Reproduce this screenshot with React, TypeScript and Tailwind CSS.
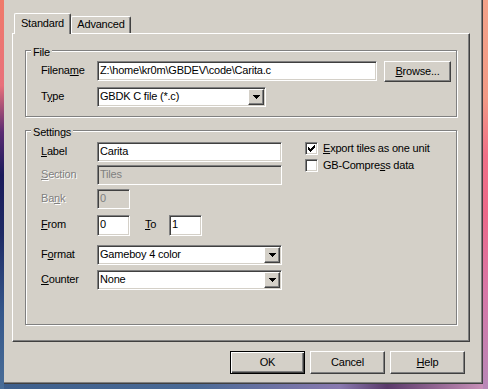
import type { ReactNode } from 'react';

const sunken =
  'border border-t-[#808080] border-l-[#808080] border-b-white border-r-white shadow-[inset_1px_1px_0_#404040,inset_-1px_-1px_0_#d4d0c8] p-[1px]';
const raised =
  'border border-t-white border-l-white border-r-[#404040] border-b-[#404040] shadow-[inset_-1px_-1px_0_#808080]';

const Row = ({ children, className = '' }: { children: ReactNode; className?: string }) => (
  <div className={`flex items-start ${className}`}>{children}</div>
);

const Lbl = ({ children, disabled }: { children: ReactNode; disabled?: boolean }) => (
  <div
    className={`w-[56px] shrink-0 pt-[3px] leading-[13px] ${
      disabled ? 'text-[#808080] [text-shadow:1px_1px_0_#fff]' : ''
    }`}
  >
    {children}
  </div>
);

const Edit = ({ value, w, h = 'h-[20px]', disabled }: { value: string; w: string; h?: string; disabled?: boolean }) => (
  <div className={`${w} ${h} shrink-0 ${sunken} ${disabled ? 'bg-[#d4d0c8] text-[#808080]' : 'bg-white'}`}>
    <div className="pl-[1px] pt-[1px] leading-[13px] whitespace-nowrap overflow-hidden">{value}</div>
  </div>
);

const Arrow = () => (
  <svg width="7" height="4" viewBox="0 0 7 4" shapeRendering="crispEdges">
    <rect x="0" y="0" width="7" height="1" fill="#000" />
    <rect x="1" y="1" width="5" height="1" fill="#000" />
    <rect x="2" y="2" width="3" height="1" fill="#000" />
    <rect x="3" y="3" width="1" height="1" fill="#000" />
  </svg>
);

const Combo = ({ value, w }: { value: string; w: string }) => (
  <div className={`${w} h-[20px] shrink-0 flex bg-white ${sunken}`}>
    <div className="flex-1 pl-[1px] pt-[1px] leading-[13px] whitespace-nowrap overflow-hidden">{value}</div>
    <div className={`w-[16px] h-[16px] bg-[#d4d0c8] flex items-center justify-center ${raised}`}>
      <Arrow />
    </div>
  </div>
);

const Check = ({ checked, children }: { checked?: boolean; children: ReactNode }) => (
  <div className="flex items-center h-[13px]">
    <div className={`w-[13px] h-[13px] bg-white flex items-center justify-center ${sunken}`}>
      {checked && (
        <svg width="7" height="7" viewBox="0 0 7 7" shapeRendering="crispEdges">
          {[2, 3, 4, 3, 2, 1, 0].map((y, x) => (
            <rect key={x} x={x} y={y} width="1" height="3" fill="#000" />
          ))}
        </svg>
      )}
    </div>
    <span className="ml-[5px] leading-[13px] whitespace-nowrap">{children}</span>
  </div>
);

const Group = ({ title, className, children }: { title: string; className: string; children: ReactNode }) => (
  <div className={`relative border border-[#808080] shadow-[inset_1px_1px_0_#fff,1px_1px_0_#fff] ${className}`}>
    <span className="absolute left-[5px] top-[-5px] px-[2px] bg-[#d4d0c8] leading-[13px]">{title}</span>
    {children}
  </div>
);

const Btn = ({ children, def, w = 'w-[75px]', h = 'h-[23px]' }: { children: ReactNode; def?: boolean; w?: string; h?: string }) => (
  <div
    className={`${w} ${h} shrink-0 flex items-center justify-center bg-[#d4d0c8] leading-[13px] ${
      def
        ? 'border border-black shadow-[inset_1px_1px_0_#fff,inset_-1px_-1px_0_#404040,inset_-2px_-2px_0_#808080]'
        : raised
    }`}
  >
    {children}
  </div>
);

export default function App() {
  return (
    <div className="flex w-[488px] h-[389px] overflow-hidden font-['Liberation_Sans',Arial,sans-serif] text-[11px] text-black tracking-[-0.2px]">
      <div className="w-[4px] shrink-0 bg-[linear-gradient(to_bottom,#f07a6a_0%,#e8707a_22%,#5a2a72_34%,#1a1a5a_45%,#1e2a64_60%,#34568a_80%,#4a6e98_100%)]" />
      <div className="w-[479px] shrink-0 flex flex-col">
        <div className="h-[384px] bg-[#d4d0c8] border-r border-b border-r-[#404040] border-b-[#404040] shadow-[inset_-1px_-1px_0_#808080] flex flex-col">
          {/* tabs */}
          <div className="h-[33px] flex items-end pl-[10px]">
            <div className="relative z-10 w-[57px] h-[21px] mb-[-1px] bg-[#d4d0c8] border-t border-l border-r border-t-white border-l-white border-r-[#404040] shadow-[inset_-1px_0_0_#808080] rounded-tl-[2px] rounded-tr-[2px] flex justify-center pt-[3px] leading-[13px]">
              Standard
            </div>
            <div className="w-[60px] h-[17px] bg-[#d4d0c8] border-t border-l border-r border-t-white border-l-white border-r-[#404040] shadow-[inset_-1px_0_0_#808080] rounded-tl-[2px] rounded-tr-[2px] flex justify-center pt-[1px] leading-[13px]">
              Advanced
            </div>
          </div>

          {/* tab page */}
          <div className="ml-[8px] w-[458px] h-[309px] border border-t-white border-l-white border-r-[#404040] border-b-[#404040] shadow-[inset_-1px_-1px_0_#808080] flex flex-col">
            <Group title="File" className="ml-[12px] mt-[16px] w-[432px] h-[67px] pt-[10px] pl-[15px]">
              <Row>
                <Lbl>
                  Filena<u>m</u>e
                </Lbl>
                <Edit value="Z:\home\kr0m\GBDEV\code\Carita.c" w="w-[280px]" />
                <div className="ml-[7px]">
                  <Btn w="w-[67px]" h="h-[21px]">
                    <span>
                      <u>B</u>rowse...
                    </span>
                  </Btn>
                </div>
              </Row>
              <Row className="mt-[5px]">
                <Lbl>
                  T<u>y</u>pe
                </Lbl>
                <Combo value="GBDK C file (*.c)" w="w-[169px]" />
              </Row>
            </Group>

            <Group title="Settings" className="ml-[12px] mt-[13px] w-[432px] h-[195px] pt-[11px] pl-[15px] flex">
              <div className="flex flex-col">
                <Row>
                  <Lbl>
                    <u>L</u>abel
                  </Lbl>
                  <Edit value="Carita" w="w-[185px]" />
                </Row>
                <Row className="mt-[3px]">
                  <Lbl disabled>
                    <u>S</u>ection
                  </Lbl>
                  <Edit value="Tiles" w="w-[185px]" disabled />
                </Row>
                <Row className="mt-[4px]">
                  <Lbl disabled>
                    Ba<u>n</u>k
                  </Lbl>
                  <Edit value="0" w="w-[33px]" disabled />
                </Row>
                <Row className="mt-[6px]">
                  <Lbl>
                    <u>F</u>rom
                  </Lbl>
                  <Edit value="0" w="w-[33px]" h="h-[21px]" />
                  <div className="w-[39px] pl-[15px] pt-[3px] leading-[13px]">
                    <u>T</u>o
                  </div>
                  <Edit value="1" w="w-[33px]" h="h-[21px]" />
                </Row>
                <Row className="mt-[9px]">
                  <Lbl>
                    F<u>o</u>rmat
                  </Lbl>
                  <Combo value="Gameboy 4 color" w="w-[185px]" />
                </Row>
                <Row className="mt-[5px]">
                  <Lbl>
                    <u>C</u>ounter
                  </Lbl>
                  <Combo value="None" w="w-[185px]" />
                </Row>
              </div>
              <div className="ml-[23px] flex flex-col gap-[4px]">
                <Check checked>
                  <u>E</u>xport tiles as one unit
                </Check>
                <Check>
                  GB-Compre<u>s</u>s data
                </Check>
              </div>
            </Group>
          </div>

          {/* buttons */}
          <div className="mt-[9px] flex justify-end gap-[5px] pr-[17px]">
            <Btn def>OK</Btn>
            <Btn>Cancel</Btn>
            <Btn>
              <span>
                <u>H</u>elp
              </span>
            </Btn>
          </div>
        </div>
        <div className="h-[5px] bg-[linear-gradient(to_right,#3e5f8c_0%,#4a6a96_40%,#8a7ab0_70%,#5a3a6a_80%,#c890b8_100%)]" />
      </div>
      <div className="w-[5px] shrink-0 bg-[linear-gradient(to_bottom,#f4a28a_0%,#f29a86_25%,#f07088_40%,#ec6a8a_55%,#d878a8_75%,#b888b8_100%)]" />
    </div>
  );
}
